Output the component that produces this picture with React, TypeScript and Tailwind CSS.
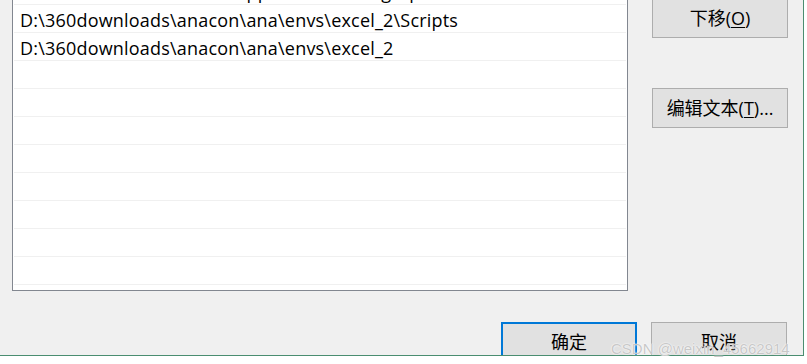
import React from 'react';

const paths = [
  'C:\\Program Files\\Git\\cmd',
  'C:\\Users\\Administrator1\\AppData\\Roaming\\npm',
  'D:\\360downloads\\anacon\\ana\\envs\\excel_2\\Scripts',
  'D:\\360downloads\\anacon\\ana\\envs\\excel_2',
];

const ROWS = 12;

const font = { fontFamily: '"Open Sans", "Noto Sans CJK SC", sans-serif' };

function DlgButton({
  children,
  primary = false,
}: {
  children: React.ReactNode;
  primary?: boolean;
}) {
  return (
    <button
      type="button"
      className={`w-[136px] h-[40px] shrink-0 bg-[#e1e1e1] text-[18px] text-black flex items-center justify-center ${
        primary ? 'border-2 border-[#0078d7]' : 'border border-[#adadad]'
      }`}
    >
      {children}
    </button>
  );
}

export default function App() {
  const rows = Array.from({ length: ROWS }, (_, i) => paths[i] ?? '');

  return (
    <div className="w-[807px] h-[364px] bg-white overflow-hidden relative" style={font}>
      {/* dialog window */}
      <div className="w-[804px] h-[356px] bg-[#f0f0f0] border-r border-b border-[#4a8d70] overflow-hidden flex flex-col">
        <div className="flex items-start pl-[12px]">
          {/* path list */}
          <div className="w-[616px] h-[344px] -mt-[53px] shrink-0 bg-white border border-[#828790] p-px">
            {rows.map((p, i) => (
              <div
                key={i}
                className="h-[28px] border-b border-[#f0f0f0] pl-[6px] flex items-center text-[18px] tracking-[0.2px] text-black whitespace-nowrap overflow-hidden leading-none pt-[2px]"
              >
                {p}
              </div>
            ))}
          </div>

          {/* side buttons */}
          <div className="ml-[24px] -mt-[2px] flex flex-col gap-[50px]">
            <DlgButton>
              下移(<span className="underline underline-offset-2">O</span>)
            </DlgButton>
            <DlgButton>
              编辑文本(<span className="underline underline-offset-2">T</span>)...
            </DlgButton>
          </div>
        </div>

        {/* bottom buttons */}
        <div className="mt-[31px] flex justify-end gap-[14px] pr-[16px]">
          <DlgButton primary>确定</DlgButton>
          <DlgButton>取消</DlgButton>
        </div>
      </div>

      {/* watermark */}
      <div
        className="absolute left-[611px] top-[341px] text-[15px] leading-none text-[#c8c8c8] whitespace-nowrap pointer-events-none"
        style={{
          fontFamily: '"Liberation Sans", sans-serif',
          textShadow: '0 0 2px #fff, 0 0 1px #fff',
        }}
      >
        CSDN @weixin_45662914
      </div>
    </div>
  );
}
